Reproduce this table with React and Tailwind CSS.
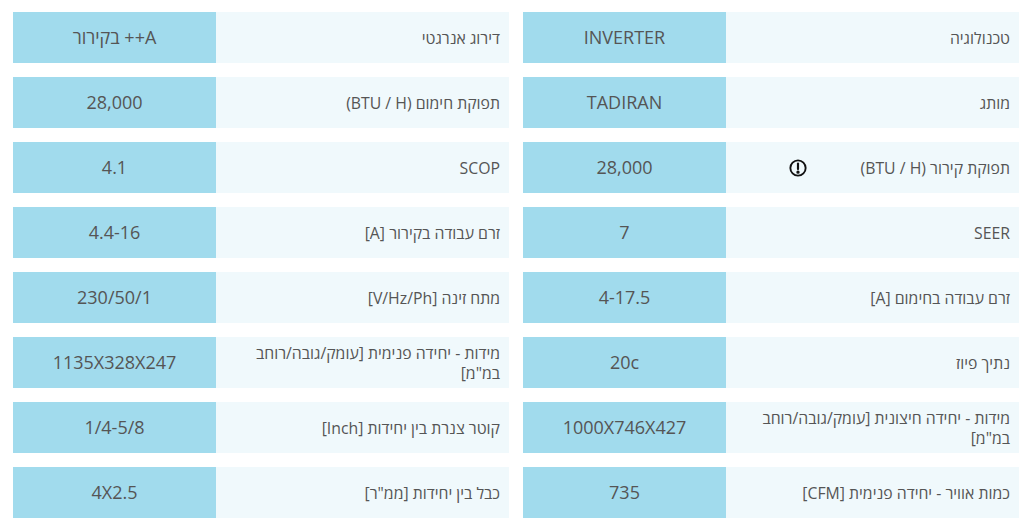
import React from 'react';

const RIGHT = [
  { label: 'טכנולוגיה', value: 'INVERTER' },
  { label: 'מותג', value: 'TADIRAN' },
  { label: 'תפוקת קירור (BTU / H)', value: '28,000', info: true },
  { label: 'SEER', value: '7' },
  { label: 'זרם עבודה בחימום [A]', value: '4-17.5' },
  { label: 'נתיך פיוז', value: '20c' },
  { label: 'מידות - יחידה חיצונית [עומק/גובה/רוחב במ"מ]', value: '1000X746X427' },
  { label: 'כמות אוויר - יחידה פנימית [CFM]', value: '735' },
];

const LEFT = [
  { label: 'דירוג אנרגטי', value: 'A++ בקירור' },
  { label: 'תפוקת חימום (BTU / H)', value: '28,000' },
  { label: 'SCOP', value: '4.1' },
  { label: 'זרם עבודה בקירור [A]', value: '4.4-16' },
  { label: 'מתח זינה [V/Hz/Ph]', value: '230/50/1' },
  { label: 'מידות - יחידה פנימית [עומק/גובה/רוחב במ"מ]', value: '1135X328X247' },
  { label: 'קוטר צנרת בין יחידות [Inch]', value: '1/4-5/8' },
  { label: 'כבל בין יחידות [ממ"ר]', value: '4X2.5' },
];

function InfoIcon() {
  return (
    <svg className="w-[18px] h-[18px] flex-shrink-0" viewBox="0 0 20 20" fill="none" stroke="#111" strokeWidth="2.1">
      <circle cx="10" cy="10" r="8.5" />
      <path d="M10 5v6.2" strokeLinecap="round" strokeWidth="2.4" />
      <circle cx="10" cy="14.6" r="0.8" fill="#111" />
    </svg>
  );
}

function SpecRow({ label, value, info }) {
  return (
    <div className="flex h-[51px]">
      <div className="w-[293px] bg-[#f0f9fc] flex items-center pr-[9px] pl-3 text-[15.8px] leading-[20px] text-[#555]">
        <span>{label}</span>
        {info && <span className="mr-auto ml-[51px] flex"><InfoIcon /></span>}
      </div>
      <div className="w-[203px] bg-[#a1dbed] flex items-center justify-center text-[18px] text-[#555]">
        {value}
      </div>
    </div>
  );
}

export default function App() {
  return (
    <div dir="rtl" className="bg-white w-[1024px] h-[530px] pt-3 pr-[5px]" style={{ fontFamily: '"Open Sans", "Noto Sans", sans-serif' }}>
      <div className="flex gap-[14px]">
        {[RIGHT, LEFT].map((col, ci) => (
          <div key={ci} className="flex flex-col gap-[14px]">
            {col.map((row) => (
              <SpecRow key={row.label} {...row} />
            ))}
          </div>
        ))}
      </div>
    </div>
  );
}
